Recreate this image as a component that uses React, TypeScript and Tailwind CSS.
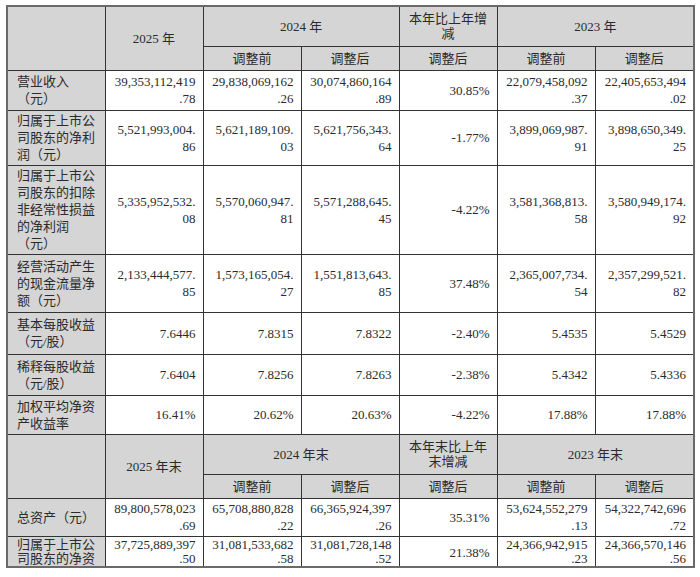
import React from 'react';

type Row = {
  label: string[];
  h: number;
  vals: (string | string[])[];
};

const topRows: Row[] = [
  {
    label: ['营业收入', '（元）'],
    h: 40,
    vals: [['39,353,112,419', '.78'], ['29,838,069,162', '.26'], ['30,074,860,164', '.89'], '30.85%', ['22,079,458,092', '.37'], ['22,405,653,494', '.02']],
  },
  {
    label: ['归属于上市公', '司股东的净利', '润（元）'],
    h: 55,
    vals: [['5,521,993,004.', '86'], ['5,621,189,109.', '03'], ['5,621,756,343.', '64'], '-1.77%', ['3,899,069,987.', '91'], ['3,898,650,349.', '25']],
  },
  {
    label: ['归属于上市公', '司股东的扣除', '非经常性损益', '的净利润', '（元）'],
    h: 89,
    vals: [['5,335,952,532.', '08'], ['5,570,060,947.', '81'], ['5,571,288,645.', '45'], '-4.22%', ['3,581,368,813.', '58'], ['3,580,949,174.', '92']],
  },
  {
    label: ['经营活动产生', '的现金流量净', '额（元）'],
    h: 58,
    vals: [['2,133,444,577.', '85'], ['1,573,165,054.', '27'], ['1,551,813,643.', '85'], '37.48%', ['2,365,007,734.', '54'], ['2,357,299,521.', '82']],
  },
  {
    label: ['基本每股收益', '（元/股）'],
    h: 42,
    vals: ['7.6446', '7.8315', '7.8322', '-2.40%', '5.4535', '5.4529'],
  },
  {
    label: ['稀释每股收益', '（元/股）'],
    h: 41,
    vals: ['7.6404', '7.8256', '7.8263', '-2.38%', '5.4342', '5.4336'],
  },
  {
    label: ['加权平均净资', '产收益率'],
    h: 39,
    vals: ['16.41%', '20.62%', '20.63%', '-4.22%', '17.88%', '17.88%'],
  },
];

const bottomRows: Row[] = [
  {
    label: ['总资产（元）'],
    h: 38,
    vals: [['89,800,578,023', '.69'], ['65,708,880,828', '.22'], ['66,365,924,397', '.26'], '35.31%', ['53,624,552,279', '.13'], ['54,322,742,696', '.72']],
  },
  {
    label: ['归属于上市公', '司股东的净资'],
    h: 30,
    vals: [['37,725,889,397', '.50'], ['31,081,533,682', '.58'], ['31,081,728,148', '.52'], '21.38%', ['24,366,942,915', '.23'], ['24,366,570,146', '.56']],
  },
];

const cell = 'border border-[#333] align-middle';
const head = `${cell} bg-[#d5d5d5] text-center leading-[15px] px-1`;

const Header: React.FC<{ suffix: string; change: string[] }> = ({ suffix, change }) => (
  <>
    <tr>
      <td rowSpan={2} className={`${head} h-[40px]`}></td>
      <td rowSpan={2} className={head}>2025 年{suffix}</td>
      <td colSpan={2} className={`${head} h-[40px]`}>2024 年{suffix}</td>
      <td className={`${head} h-[40px]`}>
        {change.map((c, i) => (
          <div key={i}>{c}</div>
        ))}
      </td>
      <td colSpan={2} className={head}>2023 年{suffix}</td>
    </tr>
    <tr>
      <td className={`${head} h-[24px]`}>调整前</td>
      <td className={head}>调整后</td>
      <td className={head}>调整后</td>
      <td className={head}>调整前</td>
      <td className={head}>调整后</td>
    </tr>
  </>
);

const Body: React.FC<{ row: Row; tight?: boolean }> = ({ row, tight }) => (
  <tr>
    <td
      className={`${cell} bg-[#d5d5d5] text-left pl-[9px] pr-1 ${tight ? 'leading-[14px] align-top pt-[1px]' : 'leading-[17px]'}`}
      style={{ height: row.h }}
    >
      {row.label.map((l, i) => (
        <div key={i}>{l}</div>
      ))}
    </td>
    {row.vals.map((v, i) => (
      <td
        key={i}
        className={`${cell} bg-white text-right pr-[7px] pl-1 ${
          tight && Array.isArray(v) ? 'leading-[14px] align-top pt-[1px]' : tight ? 'leading-[14px] pt-[3px]' : 'leading-[17px]'
        }`}
      >
        {Array.isArray(v) ? v.map((p, j) => <div key={j}>{p}</div>) : v}
      </td>
    ))}
  </tr>
);

const App: React.FC = () => {
  return (
    <div className="w-[700px] h-[577px] bg-white overflow-hidden pt-[5px] pl-[6px]">
      <table
        className="table-fixed border-collapse border-2 border-[#6a6a6a] text-[13px] text-[#2b2b2b]"
        style={{ fontFamily: '"Liberation Serif", "Noto Sans CJK SC", serif', width: 687 }}
      >
        <colgroup>
          <col className="w-[98px]" />
          <col className="w-[98px]" />
          <col className="w-[98px]" />
          <col className="w-[98px]" />
          <col className="w-[98px]" />
          <col className="w-[98px]" />
          <col className="w-[99px]" />
        </colgroup>
        <tbody>
          <Header suffix="" change={['本年比上年增', '减']} />
          {topRows.map((r, i) => (
            <Body key={i} row={r} />
          ))}
          <Header suffix="末" change={['本年末比上年', '末增减']} />
          {bottomRows.map((r, i) => (
            <Body key={i} row={r} tight={i === bottomRows.length - 1} />
          ))}
        </tbody>
      </table>
    </div>
  );
};

export default App;
